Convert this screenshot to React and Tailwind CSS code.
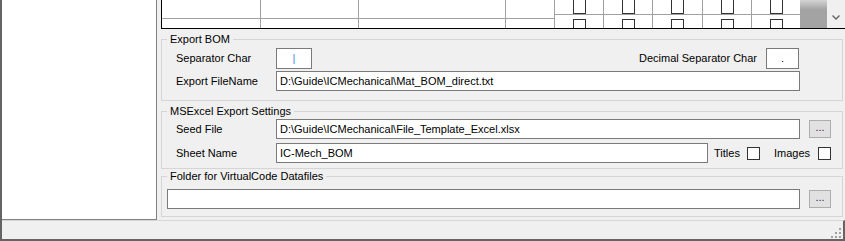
import React from "react";

const gridCols = [
  { w: "w-[99px]", check: false },
  { w: "w-[98px]", check: false },
  { w: "w-[147px]", check: false },
  { w: "w-[49px]", check: false },
  { w: "w-[49px]", check: true },
  { w: "w-[49px]", check: true },
  { w: "w-[50px]", check: true },
  { w: "w-[49px]", check: true },
  { w: "w-[48px]", check: true, last: true },
];

function Check({ className = "" }) {
  return (
    <span
      className={`block w-[13px] h-[13px] bg-white border border-[#333333] ${className}`}
    />
  );
}

function TextBox({ value, className = "" }) {
  return (
    <div
      className={`h-[20px] bg-white border border-[#7a7a7a] pl-[3px] flex items-center whitespace-nowrap overflow-hidden ${className}`}
    >
      {value}
    </div>
  );
}

function BrowseButton() {
  return (
    <button className="ml-[9px] w-[22px] h-[18px] bg-[#e1e1e1] border border-[#adadad] flex items-center justify-center text-[11px] leading-none text-[#3a1a4a] pb-[3px]">
      ...
    </button>
  );
}

function Group({ title, className = "", children }) {
  return (
    <fieldset
      className={`ml-[4px] mr-[2px] border border-[#d5d5d5] ${className}`}
    >
      <legend className="ml-[5px] px-[3px] leading-[13px]">{title}</legend>
      {children}
    </fieldset>
  );
}

export default function App() {
  return (
    <div className="w-[845px] h-[241px] bg-[#f0f0f0] border-l-2 border-b-2 border-[#646464] flex flex-col overflow-hidden font-['Liberation_Sans',Arial,sans-serif] text-[11px] text-black">
      <div className="flex h-[220px]">
        {/* left list */}
        <div className="w-[155px] bg-white border-r border-b border-[#828282]" />

        {/* right side */}
        <div className="flex-1 flex flex-col">
          {/* grid, scrolled */}
          <div className="ml-[4px] h-[29px] border-l border-b border-black flex overflow-hidden">
            {gridCols.map((c, i) => (
              <div
                key={i}
                className={`${c.w} flex flex-col ${c.last ? "" : "border-r border-[#a0a0a0]"} bg-white`}
              >
                <div className="h-[19px] border-b border-[#a0a0a0] flex justify-center">
                  {c.check && (
                    <span className="block w-[13px] h-[14px] bg-white border-x border-b border-[#333333]" />
                  )}
                </div>
                <div className="flex-1 flex justify-center">
                  {c.check && <Check className="mt-[4px] shrink-0" />}
                </div>
              </div>
            ))}
            <div className="w-[27px] bg-linear-to-b from-[#d4d4d4] to-[#a3a3a3] to-[35%]" />
            <div className="flex-1 flex justify-center pt-[15px]">
              <svg width="8" height="5" viewBox="0 0 8 5">
                <polyline
                  points="0.5,0.5 4,4 7.5,0.5"
                  fill="none"
                  stroke="#606060"
                  strokeWidth="1.3"
                />
              </svg>
            </div>
          </div>

          <Group title="Export BOM" className="mt-[4px] pb-[9px]">
            <div className="pl-[14px] pr-[11px] pt-[2px] flex flex-col gap-[2px]">
              <div className="h-[21px] flex items-center">
                <span className="w-[100px]">Separator Char</span>
                <div className="w-[36px] h-[21px] bg-white border border-[#7a7a7a] flex items-center justify-center text-[#3c8fe0]">
                  |
                </div>
                <span className="flex-1" />
                <span>Decimal Separator Char</span>
                <div className="ml-[9px] mr-[32px] w-[33px] h-[21px] bg-white border border-[#7a7a7a] flex items-center justify-center">
                  .
                </div>
              </div>
              <div className="h-[20px] flex items-center">
                <span className="w-[100px]">Export FileName</span>
                <TextBox
                  className="flex-1 mr-[31px]"
                  value="D:\Guide\ICMechanical\Mat_BOM_direct.txt"
                />
              </div>
            </div>
          </Group>

          <Group title="MSExcel Export Settings" className="mt-[4px] pb-[5px]">
            <div className="pl-[14px] pr-[11px] pt-[1px] flex flex-col gap-[4px]">
              <div className="h-[20px] flex items-center">
                <span className="w-[100px]">Seed File</span>
                <TextBox
                  className="flex-1"
                  value="D:\Guide\ICMechanical\File_Template_Excel.xlsx"
                />
                <BrowseButton />
              </div>
              <div className="h-[20px] flex items-center">
                <span className="w-[100px]">Sheet Name</span>
                <TextBox className="flex-1" value="IC-Mech_BOM" />
                <span className="ml-[6px]">Titles</span>
                <Check className="ml-[7px]" />
                <span className="ml-[14px]">Images</span>
                <Check className="ml-[8px]" />
              </div>
            </div>
          </Group>

          <Group title="Folder for VirtualCode Datafiles" className="mt-[1px] pb-[7px]">
            <div className="pl-[5px] pr-[11px] pt-[6px] flex items-center">
              <TextBox className="flex-1" value="" />
              <BrowseButton />
            </div>
          </Group>
        </div>
      </div>

      {/* status bar */}
      <div className="flex-1 border-t border-[#d7d7d7] border-r-2 border-r-[#646464] flex justify-end items-end">
        <svg width="12" height="12" viewBox="0 0 12 12" className="mr-[1px] mb-[1px]">
          <rect x="9" y="2" width="2" height="2" fill="#a0a0a0" />
          <rect x="5" y="6" width="2" height="2" fill="#a0a0a0" />
          <rect x="9" y="6" width="2" height="2" fill="#a0a0a0" />
          <rect x="1" y="10" width="2" height="2" fill="#a0a0a0" />
          <rect x="5" y="10" width="2" height="2" fill="#a0a0a0" />
          <rect x="9" y="10" width="2" height="2" fill="#a0a0a0" />
        </svg>
      </div>
    </div>
  );
}
